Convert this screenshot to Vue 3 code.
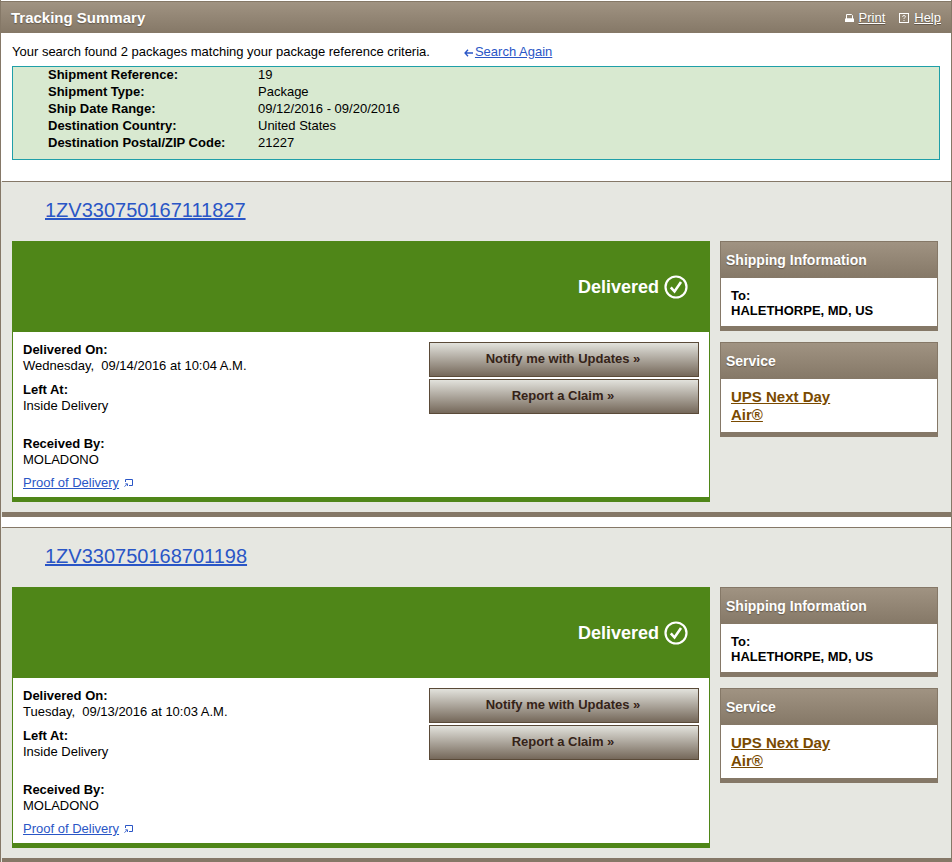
<script setup>
const summary = [
  ['Shipment Reference:', '19'],
  ['Shipment Type:', 'Package'],
  ['Ship Date Range:', '09/12/2016 - 09/20/2016'],
  ['Destination Country:', 'United States'],
  ['Destination Postal/ZIP Code:', '21227'],
]
const packages = [
  { id: '1ZV330750167111827', date: 'Wednesday,  09/14/2016 at 10:04 A.M.' },
  { id: '1ZV330750168701198', date: 'Tuesday,  09/13/2016 at 10:03 A.M.' },
]
</script>

<template>
  <div class="page">
    <header class="top">
      <h1>Tracking Summary</h1>
      <nav class="tools">
        <svg class="ico" width="9" height="8" viewBox="0 0 9 8"><path d="M1.500 .5h5l1 1v3.500h-6z" fill="none" stroke="#fff"/><path d="M0 4.500h9V8H0z" fill="#fff"/></svg>
        <a href="#">Print</a>
        <svg class="ico help" width="10" height="10" viewBox="0 0 10 10"><rect x=".5" y=".5" width="9" height="9" fill="none" stroke="#fff"/><path d="M3.600 3.800q0-1.300 1.400-1.300t1.400 1.200q0 .8-.9 1.200-.5.3-.5.9M5 7v1" fill="none" stroke="#fff" stroke-width=".9"/></svg>
        <a href="#">Help</a>
      </nav>
    </header>
    <section class="intro">
      <p class="found">
        <span>Your search found 2 packages matching your package reference criteria.</span>
        <a href="#" class="again"><svg width="9" height="8" viewBox="0 0 9 8"><path d="M4 .7 1 4l3 3.300M1 4h8" fill="none" stroke="#2a56c6" stroke-width="1.300"/></svg>Search Again</a>
      </p>
      <dl class="criteria">
        <div v-for="r in summary" :key="r[0]" class="crit-row">
          <dt>{{ r[0] }}</dt>
          <dd>{{ r[1] }}</dd>
        </div>
      </dl>
    </section>
    <section v-for="p in packages" :key="p.id" class="pkg">
      <div class="rule"></div>
      <a href="#" class="num">{{ p.id }}</a>
      <div class="row">
        <div class="card">
          <div class="status">
            <span>Delivered</span>
            <svg width="24" height="24" viewBox="0 0 24 24"><circle cx="12" cy="12" r="10.500" fill="none" stroke="#fff" stroke-width="2.200"/><path d="M6.800 12.300l3.700 4.200 6.500-9.500" fill="none" stroke="#fff" stroke-width="2.600"/></svg>
          </div>
          <div class="body">
            <div class="info">
              <div class="blk"><b>Delivered On:</b><span class="pre">{{ p.date }}</span></div>
              <div class="blk left"><b>Left At:</b><span>Inside Delivery</span></div>
              <div class="blk recv"><b>Received By:</b><span>MOLADONO</span></div>
              <div class="proof">
                <a href="#">Proof of Delivery</a>
                <svg width="9" height="8" viewBox="0 0 9 8"><path d="M1.500 3V.5h7v6H5" fill="none" stroke="#2a56c6"/><path d="M.5 7.700 3 5.200M1.300 4.800h2.200V7" fill="none" stroke="#2a56c6" stroke-width=".9"/></svg>
              </div>
            </div>
            <div class="btns">
              <button type="button">Notify me with Updates »</button>
              <button type="button">Report a Claim »</button>
            </div>
          </div>
        </div>
        <aside class="side">
          <div class="box ship">
            <h2>Shipping Information</h2>
            <div class="box-body"><b>To:</b><b>HALETHORPE, MD, US</b></div>
          </div>
          <div class="box serv">
            <h2>Service</h2>
            <div class="box-body"><a href="#">UPS Next Day<br />Air®</a></div>
          </div>
        </aside>
      </div>
      <div class="bar"></div>
    </section>
  </div>
</template>

<style>
html, body { margin: 0; background: #fff; }
</style>

<style scoped>
.page {
  box-sizing: border-box;
  width: 952px;
  height: 862px;
  overflow: hidden;
  padding-top: 1px;
  border-right: 1px solid #857867;
  border-left: 1px solid #857867;
  font: 13px/16px "Liberation Sans", Arial, sans-serif;
  color: #000;
}
.top {
  display: flex;
  justify-content: space-between;
  align-items: center;
  box-sizing: border-box;
  height: 32px;
  margin: 0 -1px;
  padding: 0 11px;
  border-top: 1px solid #857867;
  background: linear-gradient(#a09382, #857867);
}
h1 {
  margin: 0;
  font-size: 15px;
  font-weight: bold;
  color: #fff;
  text-shadow: 0 1px 1px rgba(60, 50, 40, .5);
}
.tools { display: flex; align-items: center; color: #fff; }
.tools a { color: #fff; font-size: 13px; text-shadow: 0 1px 1px rgba(60, 50, 40, .5); }
.ico { margin-right: 5px; }
.help { margin-left: 14px; }
.intro { height: 148px; box-sizing: border-box; padding: 11px 0 0 11px; }
.found { display: flex; margin: 0; height: 16px; }
.again { margin-left: 34px; color: #2a56c6; }
.again svg { margin-right: 2px; vertical-align: -1px; }
.criteria {
  box-sizing: border-box;
  width: 928px;
  height: 94px;
  margin: 6px 0 0;
  padding: 0 0 0 35px;
  border: 1px solid #1f9fa8;
  background: #d8e9d0;
}
.crit-row { display: flex; height: 17px; line-height: 15px; }
dt { width: 210px; font-weight: bold; }
dd { margin: 0; }
.pkg {
  box-sizing: border-box;
  height: 336px;
  background: #e6e7e1;
  display: flex;
  flex-direction: column;
}
.pkg + .pkg { margin-top: 10px; }
.rule { height: 1px; margin: 0 0 0 1px; background: #857867; }
.bar { height: 5px; margin: auto 0 0 1px; background: #857867; }
.num {
  display: block;
  width: fit-content;
  margin: 16px 0 0 44px;
  height: 24px;
  line-height: 24px;
  font-size: 20px;
  color: #2a56c6;
}
.row { display: flex; gap: 10px; margin: 19px 0 0 11px; }
.card { width: 698px; height: 261px; box-sizing: border-box; background: #fff; border: solid #4f8618; border-width: 0 1px 5px 1px; }
.status {
  display: flex;
  justify-content: flex-end;
  align-items: center;
  gap: 5px;
  height: 91px;
  margin: 0 -1px;
  padding-right: 22px;
  background: #4f8618;
  color: #fff;
  font-size: 18px;
  font-weight: bold;
}
.body { display: flex; justify-content: space-between; padding: 10px 10px 0; }
.blk { display: flex; flex-direction: column; }
.pre { white-space: pre; }
.left { margin-top: 8px; }
.recv { margin-top: 22px; }
.proof { margin-top: 7px; display: flex; align-items: center; gap: 5px; }
.proof a { color: #2a56c6; }
.btns { display: flex; flex-direction: column; gap: 2px; }
button {
  width: 270px;
  height: 35px;
  padding: 0 2px 2px 0;
  border: 1px solid #5a4a38;
  background: linear-gradient(#e2e2dc, #75685a);
  color: #352318;
  font: bold 13px "Liberation Sans", Arial, sans-serif;
}
.side { display: flex; flex-direction: column; gap: 11px; width: 218px; }
.box { box-sizing: border-box; border: solid #857867; border-width: 1px 1px 5px 1px; background: #fff; }
.ship { height: 90px; }
.serv { height: 95px; }
h2 {
  margin: 0;
  height: 36px;
  line-height: 36px;
  padding-left: 5px;
  font-size: 14px;
  font-weight: bold;
  color: #fff;
  background: linear-gradient(#a09382, #857867);
  text-shadow: 0 1px 1px rgba(60, 50, 40, .5);
}
.box-body { display: flex; flex-direction: column; padding: 10px 10px 0; line-height: 15px; font-weight: bold; }
.serv .box-body { padding-top: 9px; }
.serv a { font-size: 15px; line-height: 18px; color: #7a4a00; }
</style>
